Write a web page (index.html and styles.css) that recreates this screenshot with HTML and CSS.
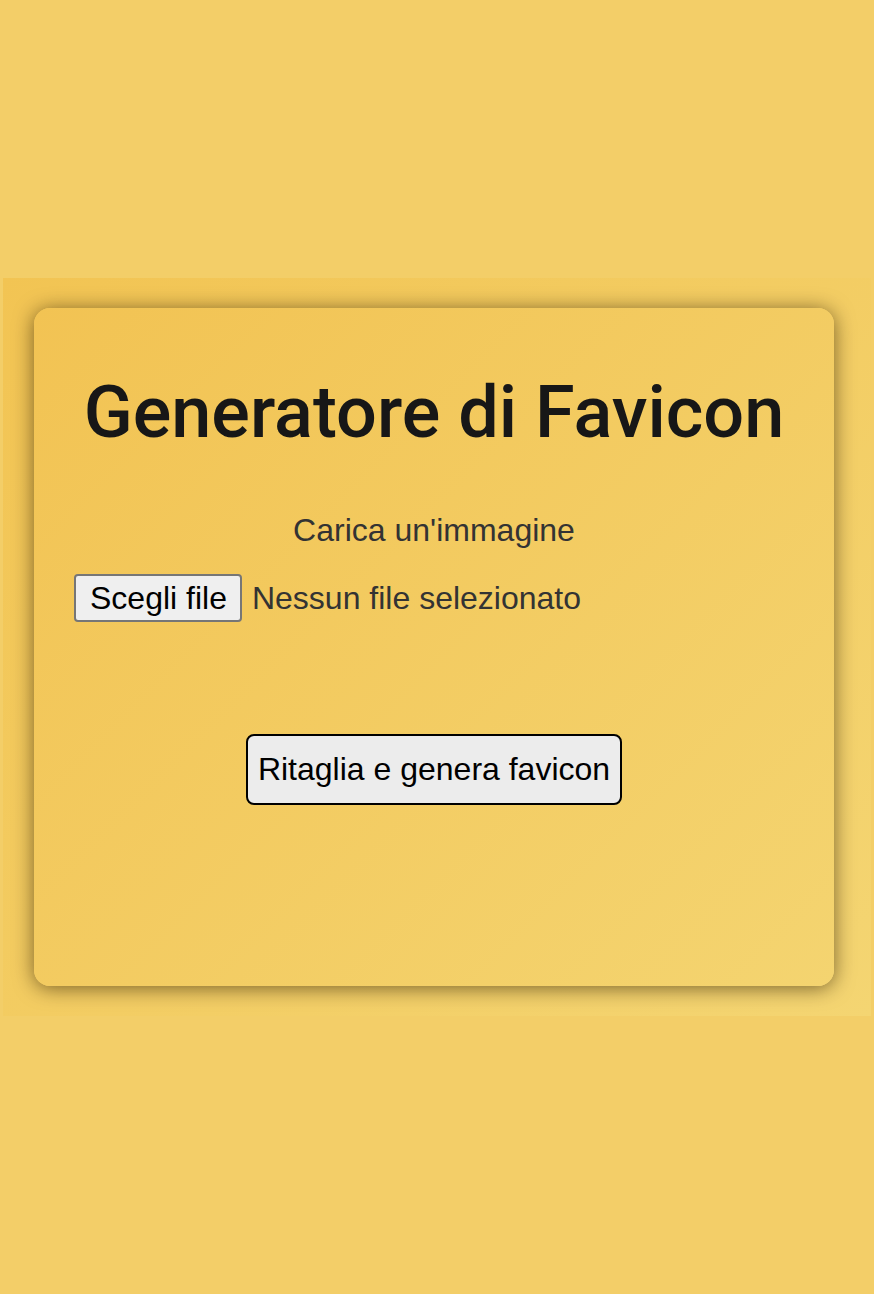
FILE: index.html
```html
<!DOCTYPE html>
<html lang="it">
<head>
<meta charset="utf-8">
<title>Generatore di Favicon</title>
<link rel="stylesheet" href="styles.css">
</head>
<body>
<div class="page">
  <section class="stage">
    <div class="card">
      <h1 class="title">Generatore di Favicon</h1>
      <label class="label" for="file">Carica un'immagine</label>
      <div class="file-row">
        <button class="file-btn" type="button">Scegli file</button>
        <span class="file-name">Nessun file selezionato</span>
      </div>
      <div class="actions">
        <button class="generate" type="button">Ritaglia e genera favicon</button>
      </div>
    </div>
  </section>
</div>
</body>
</html>
```
FILE: styles.css
```css
html, body {
  margin: 0;
  padding: 0;
}
body {
  background: #f3ce68;
  font-family: "Liberation Sans", Arial, sans-serif;
  min-height: 1294px;
}
.page {
  padding-top: 278px;
  padding-left: 3px;
  padding-right: 3px;
}
.stage {
  background: linear-gradient(135deg, #f2c453 0%, #f4d572 100%);
  padding: 30px 37px 30px 31px;
}
.card {
  background: linear-gradient(135deg, #f2c353 0%, #f4d470 100%);
  border-radius: 16px;
  box-shadow: 0 2px 20px rgba(40, 25, 0, 0.6);
  height: 678px;
  box-sizing: border-box;
  padding: 62px 40px 0 40px;
  display: flex;
  flex-direction: column;
}
.title {
  font-family: Roboto, "Liberation Sans", sans-serif;
  font-weight: 500;
  font-size: 72px;
  line-height: 1.2;
  color: #171717;
  text-align: center;
  margin: 0 0 56px 0;
}
.label {
  display: block;
  text-align: center;
  font-size: 32px;
  color: #333;
  margin-bottom: 25px;
}
.file-row {
  display: flex;
  align-items: center;
  gap: 10px;
}
.file-btn {
  font-family: "Liberation Sans", Arial, sans-serif;
  font-size: 32px;
  color: #000;
  background: #efefef;
  border: 2px solid #767676;
  border-radius: 4px;
  height: 48px;
  padding: 0 13px 0 14px;
}
.file-name {
  font-size: 32px;
  color: #333;
}
.actions {
  display: flex;
  justify-content: center;
  margin-top: 112px;
}
.generate {
  font-family: "Liberation Sans", Arial, sans-serif;
  font-size: 32px;
  color: #000;
  background: #ececec;
  border: 2px solid #000;
  border-radius: 8px;
  height: 71px;
  padding: 0 10px;
}
```
